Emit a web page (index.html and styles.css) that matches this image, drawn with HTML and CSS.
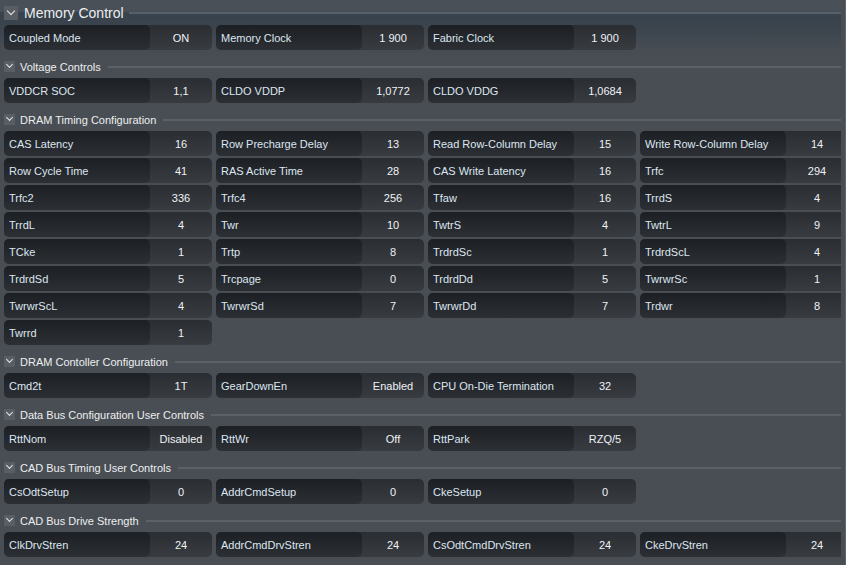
FILE: index.html
```html
<!DOCTYPE html>
<html lang="en">
<head>
    <meta charset="UTF-8">
    <title>Memory Control</title>
    <link rel="stylesheet" href="styles.css">
</head>
<body>

<div class="panel">

    <div class="group main">
        <span class="toggle"></span>
        <span class="group-name">Memory Control</span>
        <span class="rule"></span>
    </div>
    <div class="grid">
        <div class="cell"><span class="label">Coupled Mode</span><span class="value">ON</span></div>
        <div class="cell"><span class="label">Memory Clock</span><span class="value">1 900</span></div>
        <div class="cell"><span class="label">Fabric Clock</span><span class="value">1 900</span></div>
    </div>

    <div class="group">
        <span class="toggle"></span>
        <span class="group-name">Voltage Controls</span>
        <span class="rule"></span>
    </div>
    <div class="grid">
        <div class="cell"><span class="label">VDDCR SOC</span><span class="value">1,1</span></div>
        <div class="cell"><span class="label">CLDO VDDP</span><span class="value">1,0772</span></div>
        <div class="cell"><span class="label">CLDO VDDG</span><span class="value">1,0684</span></div>
    </div>

    <div class="group">
        <span class="toggle"></span>
        <span class="group-name">DRAM Timing Configuration</span>
        <span class="rule"></span>
    </div>
    <div class="grid">
        <div class="cell"><span class="label">CAS Latency</span><span class="value">16</span></div>
        <div class="cell"><span class="label">Row Precharge Delay</span><span class="value">13</span></div>
        <div class="cell"><span class="label">Read Row-Column Delay</span><span class="value">15</span></div>
        <div class="cell"><span class="label">Write Row-Column Delay</span><span class="value">14</span></div>

        <div class="cell"><span class="label">Row Cycle Time</span><span class="value">41</span></div>
        <div class="cell"><span class="label">RAS Active Time</span><span class="value">28</span></div>
        <div class="cell"><span class="label">CAS Write Latency</span><span class="value">16</span></div>
        <div class="cell"><span class="label">Trfc</span><span class="value">294</span></div>

        <div class="cell"><span class="label">Trfc2</span><span class="value">336</span></div>
        <div class="cell"><span class="label">Trfc4</span><span class="value">256</span></div>
        <div class="cell"><span class="label">Tfaw</span><span class="value">16</span></div>
        <div class="cell"><span class="label">TrrdS</span><span class="value">4</span></div>

        <div class="cell"><span class="label">TrrdL</span><span class="value">4</span></div>
        <div class="cell"><span class="label">Twr</span><span class="value">10</span></div>
        <div class="cell"><span class="label">TwtrS</span><span class="value">4</span></div>
        <div class="cell"><span class="label">TwtrL</span><span class="value">9</span></div>

        <div class="cell"><span class="label">TCke</span><span class="value">1</span></div>
        <div class="cell"><span class="label">Trtp</span><span class="value">8</span></div>
        <div class="cell"><span class="label">TrdrdSc</span><span class="value">1</span></div>
        <div class="cell"><span class="label">TrdrdScL</span><span class="value">4</span></div>

        <div class="cell"><span class="label">TrdrdSd</span><span class="value">5</span></div>
        <div class="cell"><span class="label">Trcpage</span><span class="value">0</span></div>
        <div class="cell"><span class="label">TrdrdDd</span><span class="value">5</span></div>
        <div class="cell"><span class="label">TwrwrSc</span><span class="value">1</span></div>

        <div class="cell"><span class="label">TwrwrScL</span><span class="value">4</span></div>
        <div class="cell"><span class="label">TwrwrSd</span><span class="value">7</span></div>
        <div class="cell"><span class="label">TwrwrDd</span><span class="value">7</span></div>
        <div class="cell"><span class="label">Trdwr</span><span class="value">8</span></div>

        <div class="cell"><span class="label">Twrrd</span><span class="value">1</span></div>
    </div>

    <div class="group">
        <span class="toggle"></span>
        <span class="group-name">DRAM Contoller Configuration</span>
        <span class="rule"></span>
    </div>
    <div class="grid">
        <div class="cell"><span class="label">Cmd2t</span><span class="value">1T</span></div>
        <div class="cell"><span class="label">GearDownEn</span><span class="value">Enabled</span></div>
        <div class="cell"><span class="label">CPU On-Die Termination</span><span class="value">32</span></div>
    </div>

    <div class="group">
        <span class="toggle"></span>
        <span class="group-name">Data Bus Configuration User Controls</span>
        <span class="rule"></span>
    </div>
    <div class="grid">
        <div class="cell"><span class="label">RttNom</span><span class="value">Disabled</span></div>
        <div class="cell"><span class="label">RttWr</span><span class="value">Off</span></div>
        <div class="cell"><span class="label">RttPark</span><span class="value">RZQ/5</span></div>
    </div>

    <div class="group">
        <span class="toggle"></span>
        <span class="group-name">CAD Bus Timing User Controls</span>
        <span class="rule"></span>
    </div>
    <div class="grid">
        <div class="cell"><span class="label">CsOdtSetup</span><span class="value">0</span></div>
        <div class="cell"><span class="label">AddrCmdSetup</span><span class="value">0</span></div>
        <div class="cell"><span class="label">CkeSetup</span><span class="value">0</span></div>
    </div>

    <div class="group">
        <span class="toggle"></span>
        <span class="group-name">CAD Bus Drive Strength</span>
        <span class="rule"></span>
    </div>
    <div class="grid">
        <div class="cell"><span class="label">ClkDrvStren</span><span class="value">24</span></div>
        <div class="cell"><span class="label">AddrCmdDrvStren</span><span class="value">24</span></div>
        <div class="cell"><span class="label">CsOdtCmdDrvStren</span><span class="value">24</span></div>
        <div class="cell"><span class="label">CkeDrvStren</span><span class="value">24</span></div>
    </div>

</div>

</body>
</html>
```

FILE: styles.css
```css
html, body {
    margin: 0;
    padding: 0;
    height: 100%;
    overflow: hidden;
}
body {
    background-color: #494e54;
    font-family: "Liberation Sans", Arial, sans-serif;
    border-right: 1px solid #5d6672;
}
.panel {
    width: 841px;
    height: 565px;
    overflow: hidden;
    background: linear-gradient(#4a5058 0px, #4a5058 11px, #38424c 13px, #3c454e 30px, #474c53 48px, #494e54 60px);
}

/* group headers */
.group {
    display: flex;
    align-items: center;
    height: 23px;
    padding-top: 5px;
    padding-left: 4px;
    color: #eceef0;
    font-size: 11px;
}
.group.main {
    height: 25px;
    padding-top: 0;
    font-size: 14px;
}
.toggle {
    position: relative;
    width: 11px;
    height: 11px;
    background-color: #595e65;
    flex: none;
}
.toggle::after {
    content: "";
    position: absolute;
    left: 3px;
    top: 1px;
    width: 4px;
    height: 4px;
    border-right: 1px solid #e4e6e8;
    border-bottom: 1px solid #e4e6e8;
    transform: rotate(45deg);
}
.main .toggle {
    width: 14px;
    height: 14px;
}
.main .toggle::after {
    left: 4px;
    top: 2px;
    width: 5px;
    height: 5px;
}
.group-name {
    margin-left: 5px;
    white-space: nowrap;
}
.main .group-name {
    margin-left: 6px;
}
.rule {
    flex: 1;
    height: 2px;
    margin-left: 7px;
    background-color: #5b6168;
}
.main .rule {
    background-color: #56606a;
    margin-left: 5px;
}

/* value cells */
.grid {
    display: grid;
    grid-template-columns: repeat(4, 208px);
    grid-auto-rows: 25px;
    column-gap: 4px;
    row-gap: 2px;
    padding-left: 4px;
}
.cell {
    display: grid;
    grid-template-columns: 146px 1fr;
    border-radius: 5px;
    background: linear-gradient(#2a2d31, #383b40);
    font-size: 11px;
}
.label {
    display: flex;
    align-items: center;
    padding-left: 5px;
    border-radius: 5px;
    background: linear-gradient(#1c1f23, #2c2f34);
    color: #dde6f1;
    white-space: nowrap;
}
.value {
    display: flex;
    align-items: center;
    justify-content: center;
    color: #eef2f7;
    white-space: nowrap;
}
```
